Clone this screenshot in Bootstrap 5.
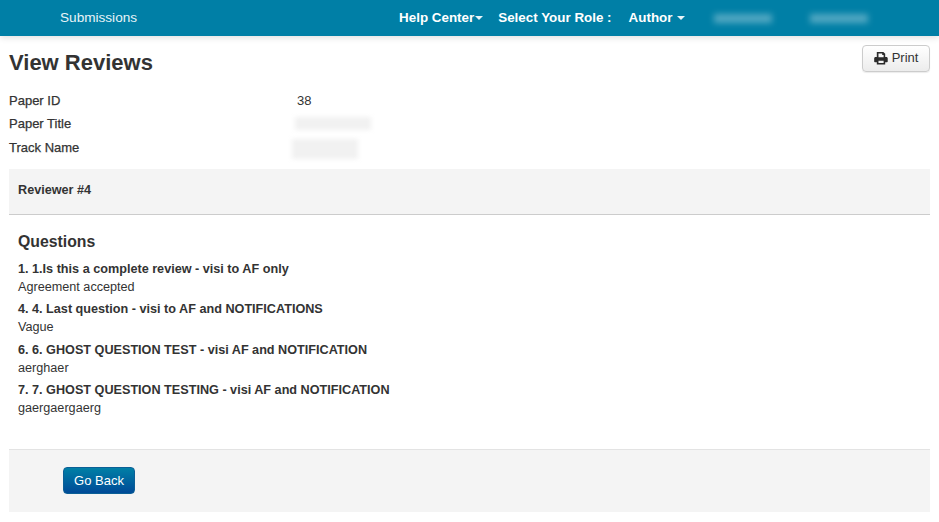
<!DOCTYPE html>
<html lang="en">
<head>
<meta charset="utf-8">
<title>View Reviews</title>
<link rel="stylesheet" href="https://cdn.jsdelivr.net/npm/bootstrap@5.3.0/dist/css/bootstrap.min.css">
<style>
html,body{height:522px;overflow:hidden}
body{font-family:"Liberation Sans",Arial,sans-serif;font-size:12.65px;color:#333;line-height:18px;background:#fff}
.topbar{height:36px;background:#007fa6;color:#fff;box-shadow:0 2px 6px rgba(0,0,0,.12);padding-left:60px}
.topbar-link{color:#e8f4f8;font-size:13.6px;text-decoration:none}
.topbar-right{margin-left:262px;font-weight:700;font-size:13.4px;gap:15px}
.caret-down{display:inline-block;border-top:4px solid #e8f4f8;border-left:4px solid transparent;border-right:4px solid transparent;vertical-align:middle;margin-left:1px}
.top-gap{margin-right:2px}
.blur-bar{display:inline-block;height:9px;background:rgba(255,255,255,.32);filter:blur(3px)}
.blur-one{margin-left:14px;width:58px}
.blur-two{margin-left:23px;width:58px}
.page-wrap{padding:9px 9px 0 9px}
.page-head{height:45.5px}
.page-title{font-size:22px;font-weight:700;line-height:34px;margin:0;padding-top:1px}
.print-btn{width:68px;height:27px;padding:0 0 1px;font-size:13px;color:#333;background:linear-gradient(#fff,#ececec);border:1px solid #ccc;border-radius:4px;box-shadow:0 1px 1px rgba(0,0,0,.08);gap:4px}
.meta-row{height:23.5px;font-size:13px;line-height:20px}
.meta-label{width:288px;-webkit-text-stroke:.25px #333}
.meta-blur{display:inline-block;background:#f1f1f1;filter:blur(2px)}
.blur-a{width:76px;height:13px;margin-top:3px;margin-left:-2px}
.blur-b{width:66px;height:20px;margin-top:1px;margin-left:-5px}
.rev-head{margin-top:7.5px;height:46px;background:#f4f4f4;border-bottom:1px solid #ccc;padding:0 9px;font-weight:700;line-height:43px}
.rev-body{padding:16px 9px 0 9px;height:234px}
.q-title{font-size:15.8px;font-weight:700;line-height:22px;margin:0 0 7px}
.q-item{margin-bottom:4.67px}
.q-name{font-weight:700}
.rev-foot{height:63px;background:#f4f4f4;border-top:1px solid #e3e3e3;padding:17px 0 0 54px}
.back-btn{width:72px;height:27px;padding:0;font-size:13px;line-height:25px;color:#fff;background:linear-gradient(#007fa6,#004a97);border:1px solid #0b5f96;border-radius:4px}
</style>
</head>
<body>
<nav class="topbar d-flex align-items-center">
  <a class="topbar-link" href="#">Submissions</a>
  <div class="topbar-right d-flex align-items-center text-white">
    <span>Help Center<i class="caret-down"></i></span>
    <span class="top-gap">Select Your Role :</span>
    <span>Author <i class="caret-down"></i></span>
    <span class="blur-bar blur-one"></span>
    <span class="blur-bar blur-two"></span>
  </div>
</nav>
<main class="page-wrap">
  <div class="page-head d-flex justify-content-between align-items-start">
    <h1 class="page-title">View Reviews</h1>
    <button class="print-btn btn d-inline-flex align-items-center justify-content-center" type="button">
      <svg width="14" height="14" viewBox="0 0 15 14" aria-hidden="true"><path fill="#2b2b2b" fill-rule="evenodd" d="M3 0.5h7l2 2V6h1.2c.9 0 1.5.7 1.5 1.500v3.200c0 .5-.4.8-.8.8H12V14H3v-2.500H1c-.5 0-.8-.3-.8-.8V7.500C.2 6.700.8 6 1.700 6H3zM4.800 2.300V6.300h5.500V3.800h-1.500V2.300zM4.800 10v2.300h5.500V10z"/></svg>
      <span>Print</span>
    </button>
  </div>
  <div class="meta-row d-flex"><div class="meta-label">Paper ID</div><div>38</div></div>
  <div class="meta-row d-flex"><div class="meta-label">Paper Title</div><div><span class="meta-blur blur-a"></span></div></div>
  <div class="meta-row d-flex"><div class="meta-label">Track Name</div><div><span class="meta-blur blur-b"></span></div></div>
  <div class="rev-head">Reviewer #4</div>
  <div class="rev-body">
    <h2 class="q-title">Questions</h2>
    <div class="q-item"><div class="q-name">1. 1.Is this a complete review - visi to AF only</div><div>Agreement accepted</div></div>
    <div class="q-item"><div class="q-name">4. 4. Last question - visi to AF and NOTIFICATIONS</div><div>Vague</div></div>
    <div class="q-item"><div class="q-name">6. 6. GHOST QUESTION TEST - visi AF and NOTIFICATION</div><div>aerghaer</div></div>
    <div class="q-item"><div class="q-name">7. 7. GHOST QUESTION TESTING - visi AF and NOTIFICATION</div><div>gaergaergaerg</div></div>
  </div>
  <div class="rev-foot"><button class="back-btn btn" type="button">Go Back</button></div>
</main>
<script src="https://cdn.jsdelivr.net/npm/bootstrap@5.3.0/dist/js/bootstrap.bundle.min.js"></script>
</body>
</html>
